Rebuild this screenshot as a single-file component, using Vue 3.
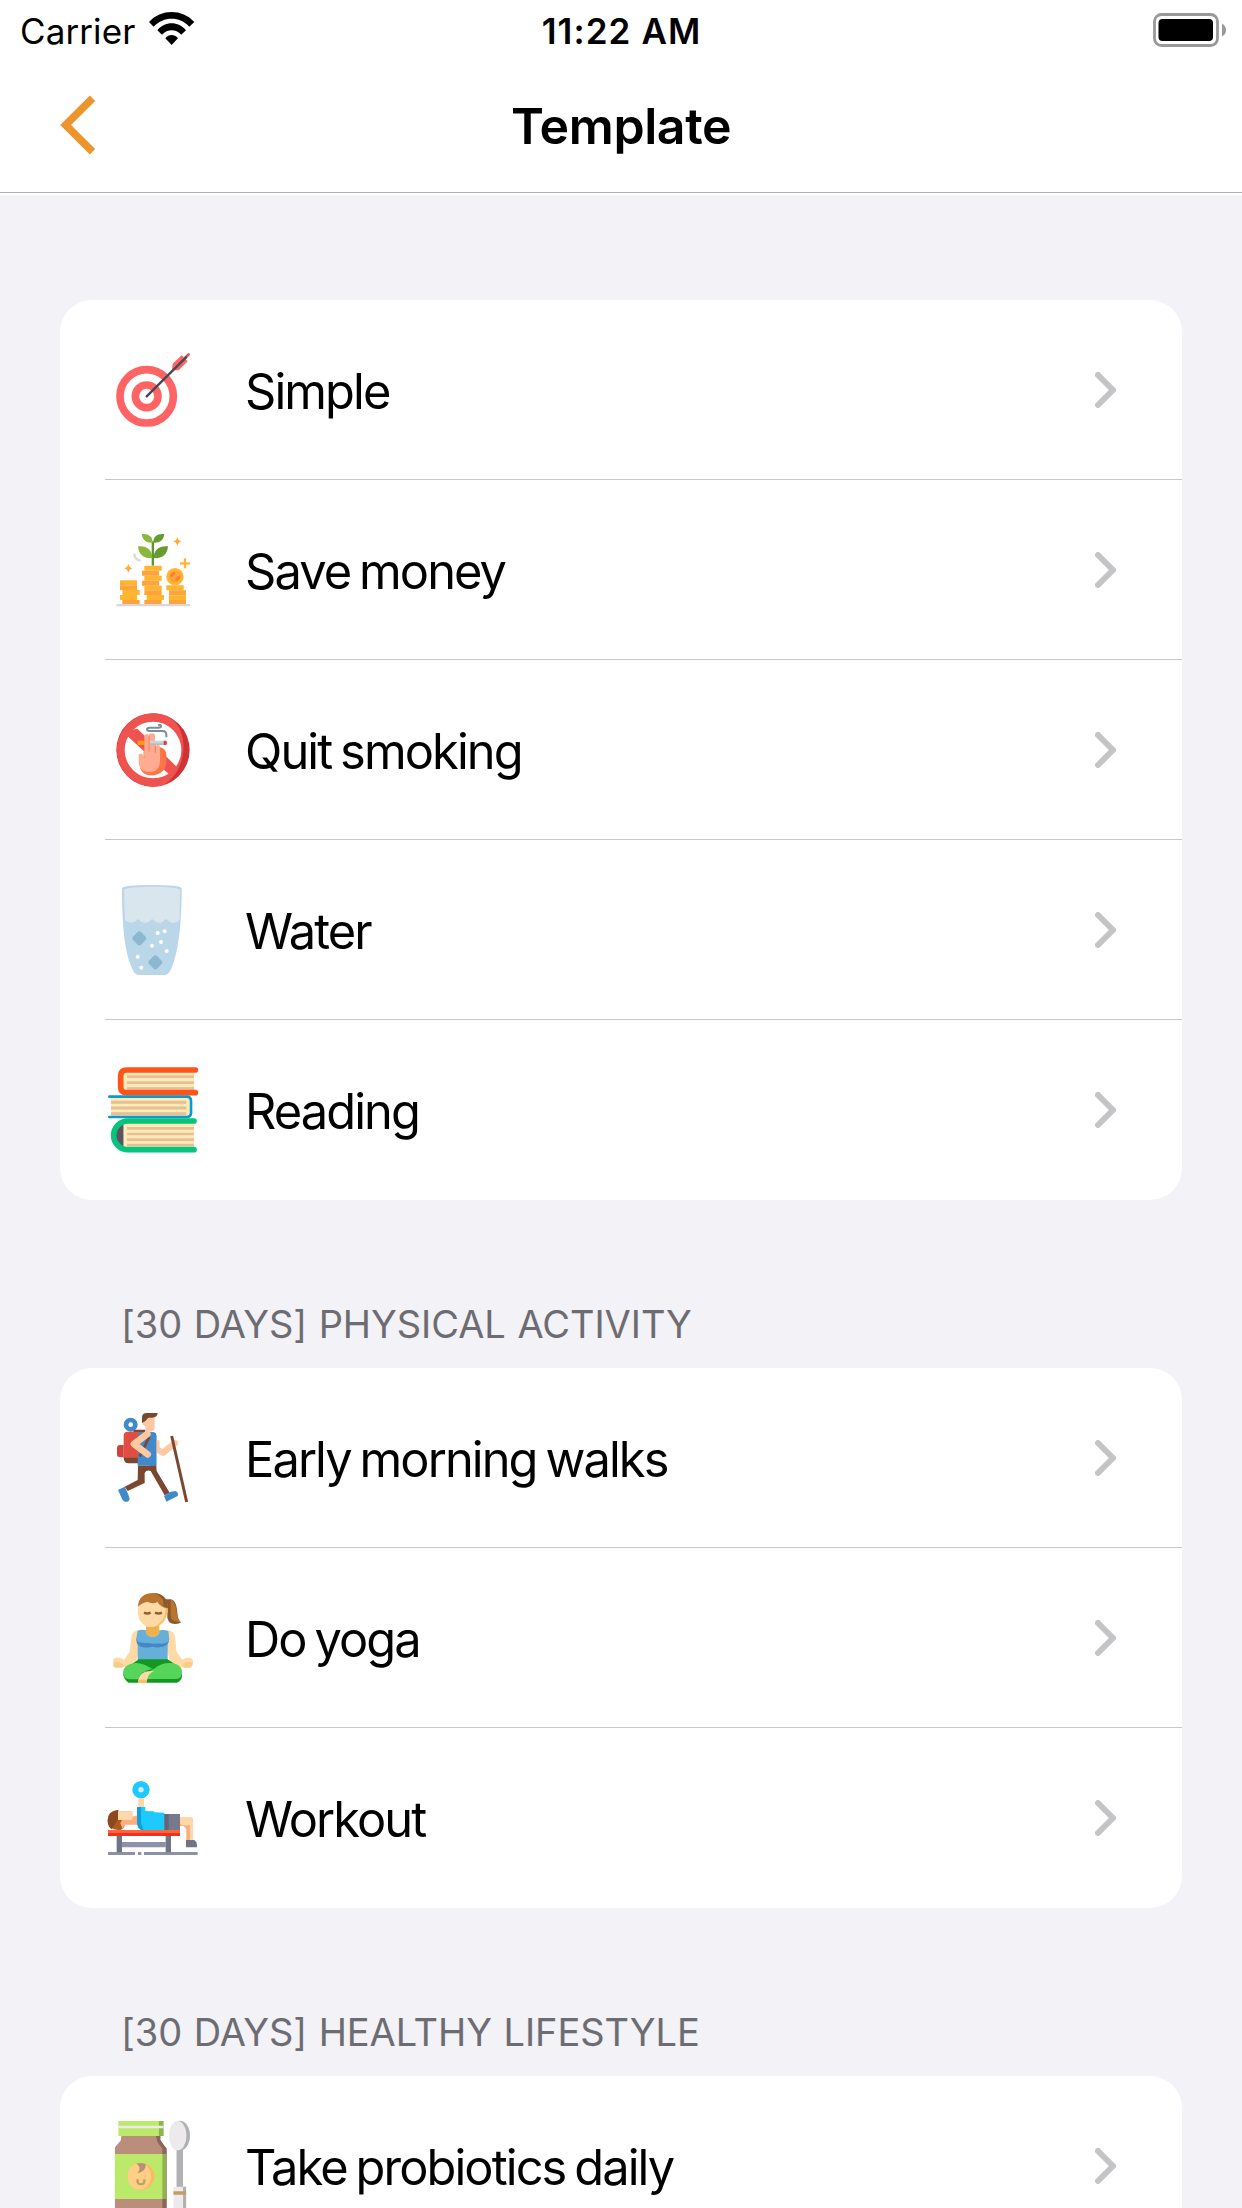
<script setup>
const sections = [
  {
    title: '',
    items: [
      { icon: 'target', label: 'Simple' },
      { icon: 'money', label: 'Save money' },
      { icon: 'smoking', label: 'Quit smoking' },
      { icon: 'water', label: 'Water' },
      { icon: 'books', label: 'Reading' },
    ],
  },
  {
    title: '[30 DAYS] PHYSICAL ACTIVITY',
    items: [
      { icon: 'walk', label: 'Early morning walks' },
      { icon: 'yoga', label: 'Do yoga' },
      { icon: 'workout', label: 'Workout' },
    ],
  },
  {
    title: '[30 DAYS] HEALTHY LIFESTYLE',
    items: [{ icon: 'jar', label: 'Take probiotics daily' }],
  },
]
</script>

<template>
  <div class="screen">
    <header class="top">
      <div class="status">
        <div class="carrier">
          <span>Carrier</span>
          <svg class="wifi" viewBox="0 0 136 100" width="45.3" height="33.3">
            <path d="M0 30C36-10 100-10 136 30L121 44C92 12 44 12 14 44Z" />
            <path d="M25 55C48 27 88 27 111 55L97 68C80 50 56 50 39 68Z" />
            <path d="M49 79C60 66 76 66 87 79L68 99Z" />
          </svg>
        </div>
        <div class="time">11:22 AM</div>
        <svg class="battery" viewBox="0 0 74 34" width="74" height="34">
          <rect x="1.5" y="1.5" width="63" height="31" rx="7" fill="#fff" stroke="#999" stroke-width="2.8" />
          <rect x="5.5" y="6" width="54.5" height="22" rx="4" />
          <path d="M69 10.5Q73 13 73 17T69 23.5Z" fill="#999" />
        </svg>
      </div>
      <div class="nav">
        <svg class="back" viewBox="0 0 40 62" width="40" height="62">
          <path d="M32.5 4.2L5.6 31L32.5 57.8" fill="none" stroke="#ee942c" stroke-width="7.6" />
        </svg>
        <h1>Template</h1>
      </div>
    </header>

    <main>
      <section v-for="s in sections" :key="s.title">
        <h2>{{ s.title }}</h2>
        <ul>
          <li v-for="item in s.items" :key="item.label">
            <svg class="icon" viewBox="0 0 330 540" width="110" height="180">
              <g v-if="item.icon === 'target'" transform="translate(-120 -30)">
                <circle cx="260" cy="319" r="80" fill="none" stroke="#ff6464" stroke-width="23" />
                <circle cx="260" cy="319" r="34" fill="none" stroke="#ff6464" stroke-width="23" />
                <path d="M338 221L365 196L371 200V207L377 208L383 214L356 241H336Z" fill="#ff6464" />
                <path d="M375 204L386 193" stroke="#e2574c" stroke-width="8" stroke-linecap="round" />
                <path d="M260 319L378 202" stroke="#444857" stroke-width="7" stroke-linecap="round" />
              </g>

              <g v-else-if="item.icon === 'money'" transform="translate(0 120)">
                <path d="M155 64H162V137H155Z" fill="#5d9632" />
                <path d="M125 42C145 40 158 48 158 68C139 69 127 60 125 42ZM114 79C139 76 157 88 157 114C133 117 116 105 114 79Z" fill="#8ab83a" />
                <path d="M193 42C172 40 160 48 160 68C180 69 191 60 193 42ZM204 79C179 76 161 88 161 114C185 117 202 105 204 79Z" fill="#689b2d" />
                <path d="M60 181H111V196H60ZM67 210H119V225H67ZM60 225H111V240H60Z" fill="#ffb531" />
                <path d="M60 196H111V210H60ZM67 240H119V252H67Z" fill="#ffa43a" />
                <path d="M133 137H185V152H133ZM133 167H185V182H133ZM133 197H185V211H133ZM140 225H192V240H140Z" fill="#ffb52f" />
                <path d="M126 152H177V167H126ZM126 182H177V197H126ZM133 211H185V225H133ZM133 240H185V252H133Z" fill="#ffa33d" />
                <path d="M199 196H251V211H199ZM207 226H258V240H207Z" fill="#ffb52f" />
                <path d="M207 211H258V226H207ZM207 240H258V252H207Z" fill="#ffa33d" />
                <circle cx="225" cy="170" r="26" fill="#ffb52f" />
                <circle cx="225" cy="170" r="17" fill="#ffa33d" />
                <path d="M212 170Q217 160 225 160M238 169Q234 179 226 180" fill="none" stroke="#ff7c2d" stroke-width="8" />
                <path d="M232 50Q234 62 246 64Q234 66 232 78Q230 66 218 64Q230 62 232 50ZM85 131Q87 143 99 145Q87 147 85 159Q83 147 71 145Q83 143 85 131Z" fill="#ffac35" />
                <path d="M255 115V145M240 130H270" stroke="#ffb52f" stroke-width="7" />
                <path d="M103 101Q104 120 122 122" fill="none" stroke="#dadada" stroke-width="7" />
                <path d="M49 252H270V259H49Z" fill="#d8d8d8" />
              </g>

              <g v-else-if="item.icon === 'smoking'" transform="translate(0 120)">
                <circle cx="159" cy="150" r="110" fill="#d13135" />
                <path d="M159 40A110 110 0 1 0 190 256C270 205 265 85 208 52A110 110 0 0 0 159 40Z" fill="#ef5350" />
                <circle cx="159" cy="150" r="85" fill="#fff" />
                <path d="M79 105L94 90L112 86L230 200L222 214L206 222Z" fill="#ef5350" />
                <path d="M176 141Q199 143 199 166V182C199 212 180 226 153 226C138 226 129 222 120 205L150 150Z" fill="#ff7547" />
                <path d="M199 112V105Q199 93 188 93H149Q141 93 141 88Q141 83 149 83H176Q183 83 183 78Q183 73 174 76" fill="none" stroke="#78909c" stroke-width="6" />
                <path d="M113 122H133V135H113Z" fill="#ff980f" />
                <path d="M190 122H199Q203 128 199 135H190Z" fill="#e53945" />
                <path d="M133 168V108Q133 102 140 102Q147 102 147 108V104Q149 100 156 100Q164 100 165 106V158H168V141Q169 134 174 135Q180 135 180 142V181C180 205 167 216 149 216C124 216 116 203 116 183V166Q117 160 124 161Q130 162 130 175Z" fill="#ffab91" />
                <path d="M147 107V155M132 155V175M166 135V157" stroke="#ff8354" stroke-width="3" />
                <path d="M150 122H190V135H150Z" fill="#cbd6db" />
                <path d="M150 130H190V135H150Z" fill="#b0bec5" />
              </g>

              <g v-else-if="item.icon === 'water'" transform="translate(0 90)">
                <path d="M66 55Q70 45 155 45T245 55C245 135 240 225 220 280Q209 315 196 315H114Q101 315 90 280C70 225 66 135 66 55Z" fill="#bad7ea" />
                <path d="M72 58Q90 50 155 50T240 58L239 148Q227 165 210 155L198 147L188 155Q178 161 167 155L156 147L146 155Q134 161 124 155L114 147L104 155Q89 162 75 151Z" fill="#dae6ee" />
                <rect x="101" y="188" width="34" height="34" rx="8" fill="#8cb7d0" transform="rotate(45 118 205)" />
                <rect x="149" y="260" width="34" height="34" rx="8" fill="#8cb7d0" transform="rotate(45 166 277)" />
                <g fill="#fff">
                  <circle cx="173" cy="189" r="6" /><circle cx="194" cy="184" r="6" />
                  <circle cx="183" cy="216" r="6" /><circle cx="156" cy="227" r="6" />
                  <circle cx="200" cy="243" r="6" /><circle cx="113" cy="260" r="6" />
                  <circle cx="124" cy="293" r="6" />
                </g>
              </g>

              <g v-else-if="item.icon === 'books'" transform="translate(0 90)">
                <rect x="68" y="65" width="214" height="58" fill="#ffebb7" />
                <path d="M81 80H282M81 98H282M81 115H282" stroke="#e6bf94" stroke-width="8" />
                <path d="M286 60H80Q62 60 62 78V110Q62 128 80 128H286" fill="none" stroke="#ff5319" stroke-width="17" stroke-linecap="round" />
                <rect x="33" y="143" width="235" height="55" fill="#ffebb7" />
                <path d="M33 157H259M33 174H259M33 191H259" stroke="#e6bf94" stroke-width="9" />
                <path d="M28 140H260Q273 140 273 153V188Q273 201 260 201H28" fill="none" stroke="#0c9acb" stroke-width="8" stroke-linecap="round" />
                <path d="M71 218Q43 228 43 256T71 293Z" fill="#5d5360" />
                <path d="M71 218H282V293H71Z" fill="#ffebb7" />
                <path d="M81 235H282M81 252H282M81 269H282M81 285H282" stroke="#e6bf94" stroke-width="8" />
                <path d="M282 213H84A43 43 0 0 0 84 299H282" fill="none" stroke="#05c47b" stroke-width="17" stroke-linecap="round" />
              </g>

              <g v-else-if="item.icon === 'walk'" transform="translate(0 96)">
                <path d="M71 170H117V190H86Q71 190 71 170Z" fill="#79482f" />
                <path d="M100 94H136" stroke="#79482f" stroke-width="9" />
                <circle cx="92" cy="74" r="14" fill="none" stroke="#4089cb" stroke-width="14" />
                <path d="M83 95H125V173H71V107Q71 95 83 95Z" fill="#e04e43" />
                <path d="M71 135V172H60Q51 172 51 162V145Q51 135 60 135Z" fill="#d2413b" />
                <path d="M116 97H158Q169 97 169 108V197H113V180Z" fill="#4089cb" />
                <path d="M169 121V147L189 158L219 134" fill="none" stroke="#fdc8a2" stroke-width="19" stroke-linejoin="round" />
                <circle cx="224" cy="130" r="10" fill="#fdc8a2" />
                <path d="M150 97H158Q169 97 169 108V197H150Z" fill="#4089cb" />
                <path d="M148 110L119 170" stroke="#79482f" stroke-width="8" />
                <path d="M142 102L102 132L143 163" fill="none" stroke="#fdc8a2" stroke-width="20" stroke-linecap="round" stroke-linejoin="round" />
                <path d="M133 66V53H164V83Q164 94 146 95Q136 95 136 86V79L126 72Z" fill="#fdc8a2" />
                <path d="M126 70V51Q127 39 140 39H173Q172 52 158 53H147Q143 53 141 58Q137 65 126 70Z" fill="#79482f" />
                <path d="M114 197H169L170 213L209 278L194 286L152 213Q140 209 134 219V249L83 273L74 260L113 240Z" fill="#79482f" />
                <path d="M54 270L74 260L84 281L89 296Q87 307 75 305Q68 304 64 292ZM192 288L212 275L227 273Q237 278 233 288L199 305Z" fill="#4089cb" />
                <path d="M215 108L260 306" stroke="#79482f" stroke-width="9" />
              </g>

              <g v-else-if="item.icon === 'yoga'" transform="translate(0 96)">
                <path d="M184 58H213C240 66 225 115 243 128Q207 140 202 113V96Z" fill="#8d582c" />
                <path d="M212 59C236 66 223 112 243 125Q211 129 212 103Z" fill="#b87532" />
                <path d="M116 151Q98 151 94 170L89 216L72 239Q60 230 45 234Q36 239 40 248L67 262H104L120 199ZM200 151Q221 151 225 170L230 216L247 239Q260 230 272 234Q282 239 278 250L247 262H214L200 204Z" fill="#ffdaa4" />
                <path d="M40 248Q61 242 70 256L67 263H45Q38 257 40 248ZM278 248Q258 242 249 256L250 263H273Q280 256 278 248Z" fill="#f9cb86" />
                <path d="M113 152Q124 147 138 151Q139 170 158 170T178 151Q194 148 205 153L208 178L203 195V247H113V195L108 180Z" fill="#66afd9" />
                <path d="M138 129H178V161Q158 181 138 161Z" fill="#eeb14c" />
                <path d="M110 177Q111 190 138 189Q151 188 158 191Q177 190 184 191Q208 190 207 177Q208 200 178 202Q168 203 158 200Q107 211 110 177Z" fill="#4687ca" />
                <path d="M114 75V103Q115 126 140 140Q175 146 195 116L203 96V74L170 48Z" fill="#ffdaa4" />
                <path d="M176 137Q204 124 203 75L195 72Q201 112 181 127L166 141Z" fill="#f9bf65" />
                <path d="M114 80C115 51 135 39 158 39C183 39 204 53 204 85Q181 82 172 65Q162 74 144 66Q129 66 114 80Z" fill="#b87532" />
                <path d="M158 39Q203 40 204 85L190 78C194 54 176 43 158 39Z" fill="#8d582c" />
                <path d="M132 98Q142 103 152 98M165 98Q176 103 186 98" fill="none" stroke="#955d35" stroke-width="7" />
                <path d="M116 238H203L236 260L158 282L85 260Z" fill="#159724" />
                <path d="M69 282Q73 301 86 308H231Q248 302 246 282L170 274H145Z" fill="#159724" />
                <path d="M106 249Q129 248 157 267Q118 274 116 298H88Q70 295 69 278Q70 252 106 249ZM211 249Q247 252 246 278Q245 296 228 297H139Q150 267 163 266Q180 249 211 249Z" fill="#55d65b" />
                <path d="M114 308Q115 274 153 273H163Q145 277 139 308Z" fill="#ffdaa4" />
                <path d="M114 308V299H140V308Z" fill="#f9bf65" />
              </g>

              <g v-else-if="item.icon === 'workout'" transform="translate(0 96)">
                <path d="M115 106H132V145H115Z" fill="#ffd7a8" />
                <circle cx="123" cy="89" r="17" fill="#dce4ee" stroke="#1dcaff" stroke-width="18" />
                <path d="M54 150Q23 152 23 181Q24 208 55 211Q70 210 75 194V180Z" fill="#ad5a20" />
                <path d="M54 150V178L35 208Q22 199 23 181Q24 154 54 150Z" fill="#8e4820" />
                <path d="M54 154H97V170L112 166V194H76L67 205L61 190L66 180H54Z" fill="#ffad7c" />
                <path d="M54 154H97V180H54Z" fill="#ffd7a8" />
                <path d="M111 141H136V153L162 154L163 157L193 158V212H128Q112 208 111 190Z" fill="#1dcaff" />
                <path d="M111 141H123V190L131 211Q112 209 111 185Z" fill="#139ddd" />
                <path d="M193 162H240V211H193Z" fill="#767a8c" />
                <path d="M193 162H206V211H193Z" fill="#616678" />
                <path d="M240 171H269Q279 171 279 185V240H259V207L251 198H240Z" fill="#ffad7c" />
                <path d="M240 171H269Q279 171 279 185V240H270V196H251Q240 195 240 187Z" fill="#ffd7a8" />
                <path d="M258 240H282Q292 244 291 262H258Z" fill="#6f7489" />
                <path d="M24 276H105V285H24ZM114 276H124V285H114ZM132 276H293V285H132Z" fill="#8c91a6" />
                <path d="M66 246H197V262H66Z" fill="#8c91a6" />
                <path d="M50 228H66V277H50ZM197 228H213V277H197Z" fill="#6f7489" />
                <path d="M24 210H240V228H24Z" fill="#f3301f" />
                <path d="M24 210H240V219H24Z" fill="#ff6740" />
              </g>

              <g v-else transform="translate(0 -48) scale(1.148 1)">
                <path d="M56 228H152V241L174 264V445H39V262L54 242Z" fill="#ba8e7b" />
                <path d="M146 228H158V240L174 266V445H163V266L150 246Z" fill="#896657" />
                <path d="M39 282H173V417H39ZM48 183H166V228H48Z" fill="#bde96b" />
                <path d="M163 282H173V417H163ZM154 183H166V228H154Z" fill="#91b252" />
                <path d="M48 197H166V205H48Z" fill="#eceaec" />
                <ellipse cx="107" cy="349" rx="35" ry="40" fill="#fdb95d" />
                <ellipse cx="103" cy="349" rx="31" ry="40" fill="#ffcf86" />
                <path d="M95 311Q107 307 119 312Q123 334 97 340Q111 322 95 311Z" fill="#ba8e7b" />
                <path d="M98 358V365Q99 373 107 373T116 365V358" fill="none" stroke="#c39d61" stroke-width="6" />
                <path d="M200 265H217V383H200Z" fill="#b1b0b3" />
                <ellipse cx="209" cy="227" rx="26" ry="45" fill="#b1b0b3" />
                <ellipse cx="203" cy="227" rx="23" ry="44" fill="#eceaec" />
                <path d="M192 380H225V445H192Z" fill="#eceaec" />
                <path d="M217 380H225V445H217Z" fill="#b1b0b3" />
                <path d="M192 394H225V404H192Z" fill="#c39d61" />
              </g>
            </svg>
            <span class="label">{{ item.label }}</span>
            <svg class="chevron" viewBox="0 0 21 36" width="21" height="36">
              <path d="M3 3L18 18L3 33" fill="none" stroke="#c4c4c6" stroke-width="6" stroke-linecap="round" stroke-linejoin="round" />
            </svg>
          </li>
        </ul>
      </section>
    </main>
  </div>
</template>

<style>
body {
  margin: 0;
  overflow: hidden;
}
</style>

<style scoped>
.screen {
  width: 1242px;
  height: 2208px;
  overflow: hidden;
  background: #f2f2f7;
  color: #000;
  font-family: Inter, "Liberation Sans", sans-serif;
}
.top {
  box-sizing: border-box;
  height: 195px;
  background: #fff;
}
.status {
  display: grid;
  grid-template-columns: 1fr auto 1fr;
  align-items: center;
  height: 60px;
  padding: 0 15px 0 20px;
}
.carrier {
  display: flex;
  align-items: center;
  gap: 14px;
  padding-top: 2px;
  font-size: 35px;
  line-height: 44px;
  letter-spacing: 0.1px;
}
.wifi {
  margin-top: -5px;
}
.time {
  padding-top: 2px;
  font-size: 35px;
  line-height: 44px;
  font-weight: 600;
  letter-spacing: 1.1px;
  margin-left: -4px;
}
.battery {
  justify-self: end;
}
.nav {
  display: grid;
  grid-template-columns: 1fr auto 1fr;
  align-items: center;
  height: 132px;
  border-bottom: 1px solid #b0b0b2;
  padding: 0 60px;
}
.back {
  margin-bottom: 2px;
}
h1 {
  margin: 0;
  font-size: 50px;
  line-height: 60px;
  font-weight: 600;
  letter-spacing: -0.4px;
}
h2 {
  box-sizing: border-box;
  height: 168px;
  margin: 0;
  padding: 101px 61px 0;
  font-size: 38px;
  line-height: 46px;
  font-weight: 400;
  letter-spacing: -0.06px;
  word-spacing: 1px;
  color: #6d6c72;
}
section {
  padding: 0 60px;
}
section:first-child h2 {
  height: 105px;
}
ul {
  margin: 0;
  padding: 0;
  list-style: none;
  border-radius: 32px;
  overflow: hidden;
  background: #fff;
}
li {
  box-sizing: border-box;
  display: flex;
  align-items: center;
  height: 180px;
  margin-left: 45px;
  padding-right: 66px;
  border-bottom: 1px solid #c8c8ca;
}
li:last-child {
  border-bottom-color: transparent;
}
.icon {
  flex: none;
  margin: 0 35px -1px -5px;
}
.label {
  flex: 1;
  padding-top: 5px;
  font-size: 48.75px;
  line-height: 60px;
  letter-spacing: -1.9px;
  word-spacing: -3px;
  white-space: nowrap;
}
.chevron {
  flex: none;
}
</style>
